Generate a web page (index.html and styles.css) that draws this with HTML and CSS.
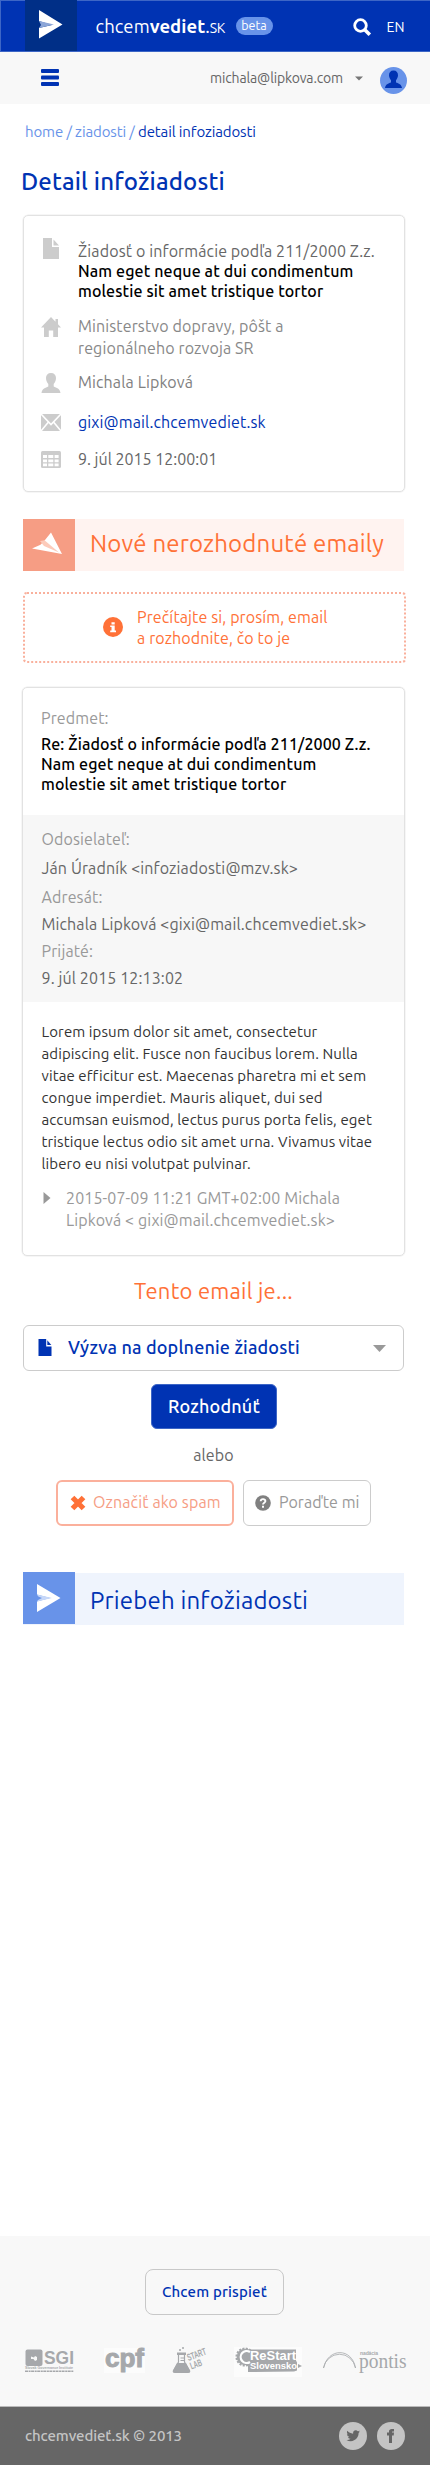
FILE: index.html
```
<!DOCTYPE html>
<html lang="sk">
<head>
<meta charset="utf-8">
<title>Detail infožiadosti – chcemvediet.sk</title>
<link rel="stylesheet" href="styles.css">
</head>
<body>
<header class="topbar">
  <a class="logo"><svg width="52" height="51" viewBox="0 0 52 51"><path d="M14 10 37.500 24.500 14 38.500V28L27 25 14 21z" fill="#fff"/><path d="M14 21 29 24.500 14 28l2-3z" fill="#8ca6d8"/></svg></a>
  <div class="brand"><span>chcem</span><b>vediet</b><span>.</span><span class="brand-tld">SK</span></div>
  <span class="beta">beta</span>
  <svg class="search" width="19" height="19" viewBox="0 0 19 19" fill="none" stroke="#fff"><circle cx="7.500" cy="7.500" r="5.800" stroke-width="2.800"/><path d="m11.800 11.800 5 5" stroke-width="3.600"/></svg>
  <span class="lang">EN</span>
</header>
<nav class="userbar">
  <svg class="menu" width="18" height="17" viewBox="0 0 18 17" fill="#0033b3"><rect width="18" height="4" rx="1"/><rect y="6.500" width="18" height="4" rx="1"/><rect y="13" width="18" height="4" rx="1"/></svg>
  <span class="user">michala@lipkova.com</span>
  <svg class="caret" width="8" height="5" viewBox="0 0 8 5"><path d="M0 .5h8L4 4.500z" fill="#777"/></svg>
  <svg class="avatar" width="27" height="27" viewBox="0 0 27 27"><circle cx="13.500" cy="13.500" r="13.500" fill="#6893e9"/><path d="M13.500 3.500c-3 0-4.700 2-4.500 5 .1 1.600 1 3.500 2 4.700v2.300c-2.700.9-5.500 1.700-6 5.500h17c-.5-3.800-3.300-4.600-6-5.500v-2.300c1-1.200 1.900-3.100 2-4.700.2-3-1.500-5-4.500-5z" fill="#0033b3"/></svg>
</nav>

<main class="page">
  <div class="crumbs"><span class="crumb-links">home / ziadosti / </span><span class="crumb-here">detail infoziadosti</span></div>
  <h1>Detail infožiadosti</h1>

  <section class="card info">
    <div class="row row-subject">
      <svg width="22" height="22" viewBox="0 0 22 22" fill="#ccc"><path d="M3 0h9v9h7v12H3z"/><path d="m13.500 1.500 5.500 6h-5.500z"/></svg>
      <div><div>Žiadosť o informácie podľa 211/2000 Z.z.</div><b>Nam eget neque at dui condimentum</b><br><b>molestie sit amet tristique tortor</b></div>
    </div>
    <div class="row row-office">
      <svg width="22" height="22" viewBox="0 0 22 22" fill="#ccc"><path d="M11 0 1 10.500h3V20h4.800v-6.500h4.400V20H18v-9.500h3L18 7.300V2h-2.500v2.700z"/></svg>
      <div>Ministerstvo dopravy, pôšt a<br>regionálneho rozvoja SR</div>
    </div>
    <div class="row row-person">
      <svg width="22" height="22" viewBox="0 0 22 22" fill="#ccc"><path d="M11 0C7.800 0 6 2 6 5c0 2.200.9 4.500 2.300 6v2.500C5.500 14.800 2 15.500 1.500 20h19c-.5-4.500-4-5.200-6.800-6.500V11c1.400-1.500 2.300-3.800 2.300-6 0-3-1.800-5-5-5z"/></svg>
      <div>Michala Lipková</div>
    </div>
    <div class="row row-mail">
      <svg width="22" height="22" viewBox="0 0 22 22"><path d="M1 0h20v17H1z" fill="#ccc"/><path d="m1 0 10 10.500L21 0M1 17l7.500-9M21 17l-7.500-9" fill="none" stroke="#fff" stroke-width="1.600"/></svg>
      <div>gixi@mail.chcemvediet.sk</div>
    </div>
    <div class="row row-date">
      <svg width="22" height="22" viewBox="0 0 22 22"><rect x="1" width="20" height="17" rx="1.500" fill="#ccc"/><path d="M3 4h4v3H3zm5.300 0h5v3h-5zm6.300 0h4v3h-4zM3 8.500h4v2.700H3zm5.300 0h5v2.700h-5zm6.300 0h4v2.700h-4zM3 12.600h4v2.700H3zm5.300 0h5v2.700h-5zm6.300 0h4v2.700h-4z" fill="#fff"/></svg>
      <div>9. júl 2015 12:00:01</div>
    </div>
  </section>

  <h2 class="banner banner-new">
    <svg width="52" height="52" viewBox="0 0 52 52"><path d="M0 0h52v52H0z" fill="#f69d84"/><path d="M28 13.500 39 35 9 29.500l8.500-3.700L22 21z" fill="#fff"/><path d="m17 22 4.500-.7L36 33.500 21 27z" fill="#fccbbb"/></svg>
    <span>Nové nerozhodnuté emaily</span>
  </h2>

  <div class="notice">
    <svg width="20" height="20" viewBox="0 0 20 20"><circle cx="10" cy="10" r="10" fill="#ff7137"/><path d="M8.500 5.300h3.200V7.500H8.500zM7.200 8.400h4.500v5.100h1.300v1.700H7.200v-1.700h1.300v-3.400H7.200z" fill="#fff"/></svg>
    <div>Prečítajte si, prosím, email<br>a rozhodnite, čo to je</div>
  </div>

  <section class="card email">
    <div class="subject">
      <div class="label">Predmet:</div>
      <b>Re: Žiadosť o informácie podľa 211/2000 Z.z.<br>Nam eget neque at dui condimentum<br>molestie sit amet tristique tortor</b>
    </div>
    <dl class="meta">
      <dt>Odosielateľ:</dt><dd class="from">Ján Úradník &lt;infoziadosti@mzv.sk&gt;</dd>
      <dt>Adresát:</dt><dd>Michala Lipková &lt;gixi@mail.chcemvediet.sk&gt;</dd>
      <dt>Prijaté:</dt><dd>9. júl 2015 12:13:02</dd>
    </dl>
    <p class="body">Lorem ipsum dolor sit amet, consectetur<br>adipiscing elit. Fusce non faucibus lorem. Nulla<br>vitae efficitur est. Maecenas pharetra mi et sem<br>congue imperdiet. Mauris aliquet, dui sed<br>accumsan euismod, lectus purus porta felis, eget<br>tristique lectus odio sit amet urna. Vivamus vitae<br>libero eu nisi volutpat pulvinar.</p>
    <div class="quote">
      <svg width="8" height="12" viewBox="0 0 8 12"><path d="M.5 0 7.500 6l-7 6z" fill="#999"/></svg>
      <div>2015-07-09 11:21 GMT+02:00 Michala<br>Lipková &lt; gixi@mail.chcemvediet.sk&gt;</div>
    </div>
  </section>

  <form class="decide">
    <h3>Tento email je...</h3>
    <div class="select">
      <svg width="14" height="18" viewBox="0 0 14 18" fill="#0033b3"><path d="M.5 0h7.700v7.500h5.300V17H.5z"/><path d="m9.300 1.200 4 4.800h-4z"/></svg>
      <span>Výzva na doplnenie žiadosti</span>
      <svg width="13" height="7" viewBox="0 0 13 7"><path d="M0 0h13L6.500 7z" fill="#999"/></svg>
    </div>
    <a class="btn-primary">Rozhodnúť</a>
    <div class="or">alebo</div>
    <div class="actions">
      <a class="btn spam"><svg width="16" height="16" viewBox="0 0 16 16"><path d="m2.500 2.500 11 11m0-11-11 11" stroke="#ff7137" stroke-width="5.200"/></svg><span>Označiť ako spam</span></a>
      <a class="btn help"><svg width="16" height="16" viewBox="0 0 16 16"><circle cx="8" cy="8" r="7.800" fill="#808080"/><path d="M5.700 6.300c.1-3 4.900-2.700 4.700 0-.1 1.500-2.400 1.500-2.400 3.300" fill="none" stroke="#fff" stroke-width="1.900"/><path d="M7 10.700h2v2H7z" fill="#fff"/></svg><span>Poraďte mi</span></a>
    </div>
  </form>

  <h2 class="banner banner-progress">
    <svg width="52" height="52" viewBox="0 0 52 52"><path d="M0 0h52v52H0z" fill="#6893e9"/><path d="M14 12 37.500 26 14 40V29.500L27 26l-13-3.500z" fill="#fff"/><path d="M14 22.500 29 26l-15 3.500 2-3.500z" fill="#c6d7f8"/><path d="m14 24 5 2-5 2.500z" fill="#6893e9"/></svg>
    <span>Priebeh infožiadosti</span>
  </h2>
</main>

<footer>
  <div class="support">
    <a class="contribute">Chcem prispieť</a>
    <svg class="partners" width="430" height="34" viewBox="0 0 430 34" fill="#a6a8ab">
      <g>
        <rect x="25.500" y="2.500" width="17" height="16.500" rx="2"/><path d="m31 9.500 3 1 1-1.500 2 1v3l-2 1-1.500-2H31z" fill="#f8f8f8"/>
        <text class="sans" x="44" y="16.500" font-size="18" font-weight="700" textLength="30" lengthAdjust="spacingAndGlyphs">SGI</text>
        <text class="sans" x="25" y="22.300" font-size="4.200" font-weight="700" textLength="48" lengthAdjust="spacingAndGlyphs">Slovak Governance Institute</text>
        <path d="M25 24.200h48.500" stroke="#a6a8ab" stroke-width="1.400" stroke-dasharray="3 .6 2 .5"/>
      </g>
      <g>
        <rect x="104" y="1" width="41" height="25" fill="#fcfcfc"/>
        <text class="sans" x="105" y="19.500" font-size="25" font-weight="700" stroke="#a6a8ab" textLength="39" lengthAdjust="spacingAndGlyphs">cpf</text>
      </g>
      <g>
        <path d="M178.500 8v7l-5 8.500q-.8 2 1.500 2h13q2.300 0 1.500-2l-5-8.500V8" fill="none" stroke="#a6a8ab" stroke-width="1.200"/><path d="M177 16h9l4 8q.3 1.500-1.500 1.500h-14q-1.800 0-1.500-1.500zM177 5.500h9V8h-9z"/><circle cx="180" cy="3" r="1"/><circle cx="183" cy="1" r="1"/><path d="M180.500 11h4M180.500 13.500h4" stroke="#a6a8ab"/>
        <g class="sans" font-size="10" font-weight="700"><text transform="translate(188.500 14) rotate(-20)" textLength="19.500" lengthAdjust="spacingAndGlyphs">START</text><text transform="translate(191.500 22.500) rotate(-20)" textLength="12" lengthAdjust="spacingAndGlyphs">LAB</text></g>
      </g>
      <g>
        <path d="M234 0h68v30h-68z" fill="#fcfcfc"/>
        <circle cx="245" cy="10" r="8.300" stroke="#a6a8ab" stroke-width="2.500" stroke-dasharray="2 1.300"/><path d="M246 2.500h50v11l1 2v8l-3 1-46 .5v-8z"/>
        <path d="M250 5a6 6 0 1 0 0 10" fill="none" stroke="#fff" stroke-width="2.200"/>
        <g class="sans" fill="#fff" font-weight="700"><text x="250" y="13.300" font-size="12.500" textLength="46" lengthAdjust="spacingAndGlyphs">ReStart</text><text x="250" y="22.300" font-size="9.500" textLength="47" lengthAdjust="spacingAndGlyphs">Slovensko</text></g>
        <path d="m298 17 4 2-4 2z"/>
      </g>
      <g>
        <path d="M323.500 21A16.300 17 0 0 1 355.500 21C352 .500 328 .500 323.500 21z" fill="none" stroke="#a6a8ab" stroke-width=".8"/>
        <text class="serif" x="359" y="20.500" font-size="22" textLength="47.500" lengthAdjust="spacingAndGlyphs">pontis</text>
        <text class="sans" x="360" y="8" font-size="5" font-weight="700" textLength="18">nadácia</text>
      </g>
    </svg>
  </div>
  <div class="bottom">
    <span>chcemvedieť.sk © 2013</span>
    <svg width="28" height="28" viewBox="0 0 28 28"><circle cx="14" cy="14" r="14" fill="#c4c4c4"/><path transform="translate(7.500 7) scale(.56)" fill="#666" d="M23.950 4.570a10 10 0 0 1-2.820.77 4.960 4.960 0 0 0 2.160-2.720c-.95.560-2 .96-3.130 1.180a4.920 4.920 0 0 0-8.380 4.480C7.690 8.100 4.070 6.130 1.640 3.160a4.920 4.920 0 0 0 1.520 6.570 4.900 4.900 0 0 1-2.230-.61v.06a4.920 4.920 0 0 0 3.950 4.830 5 5 0 0 1-2.210.08 4.940 4.940 0 0 0 4.600 3.420A9.870 9.870 0 0 1 0 19.540a13.990 13.990 0 0 0 7.550 2.210c9.050 0 14-7.500 14-13.980 0-.21 0-.42-.02-.63a9.940 9.940 0 0 0 2.460-2.550z"/></svg>
    <svg width="28" height="28" viewBox="0 0 28 28"><circle cx="14" cy="14" r="14" fill="#c4c4c4"/><path d="M12 21v-7.500h-2v-3h2V9.700C12 7.500 13.200 7 17 7v2.500h-1.200c-.7 0-.8.200-.8 1h2l-.3 3H15V21z" fill="#666"/></svg>
  </div>
</footer>
</body>
</html>
```
FILE: styles.css
```
body{margin:0;width:430px;background:#fff;font-family:Ubuntu,"Noto Sans",sans-serif;font-size:16px;line-height:22px;color:#666;letter-spacing:.12px;white-space:nowrap}
*{box-sizing:border-box}
svg{display:block;flex:none}
b{font-weight:500}
h1,h2,h3,p,dl,dd{margin:0}

.topbar{height:52px;display:flex;background:#0033b3;border:1px solid #3d66c6;border-right:0;color:#fff}
.logo{width:52px;height:51px;margin:-1px 0 0 24px;background:#002f87}
.brand{width:132px;margin:13px 0 0 18.500px;font-size:18.500px;line-height:24px;letter-spacing:.05px}
.brand b{font-weight:700}
.brand-tld{font-size:14px;letter-spacing:-.4px}
.beta{margin:16px 0 0 8px;width:37px;height:18px;border-radius:9px;background:#6893e9;font-size:12.500px;line-height:17px;text-align:center;letter-spacing:0}
.search{margin:17px 0 0 80px}
.lang{margin:15px 0 0 15px;font-size:14px}

.userbar{height:52px;display:flex;background:#f8f8f8}
.menu{margin:17px 0 0 41px}
.user{width:133px;margin:15px 0 0 151px;font-size:14px;letter-spacing:-.14px}
.caret{margin:24px 0 0 12px}
.avatar{margin:15px 0 0 17px}

.page{padding:17px 25px 0 23px}
.crumbs{padding:0 2px;font-size:15px;letter-spacing:-.12px;white-space:pre}
.crumb-links{color:#6893e9}
.crumb-here{color:#0033b3}
h1{margin:22px 0 0 -2px;font-size:24px;line-height:34px;font-weight:500;letter-spacing:.19px;color:#0033b3}

.card{border:1px solid #e2e2e2;border-radius:5px;box-shadow:0 0 0 .5px #eee}
.info{height:277px;margin-top:16px;padding:25px 0 0 16px}
.row{display:flex;gap:16px}
.row-subject{line-height:20px}
.row-subject>svg{margin-top:-3px}
.row-subject b,.subject b{color:#000}
.row-office{margin-top:14px;color:#888}
.row-office>svg,.row-person>svg{margin-top:2px}
.row-person{margin-top:12px;color:#808080}
.row-person>svg,.row-mail>svg,.row-date>svg{margin-bottom:-4px}
.row-mail{margin-top:18px;color:#0033b3}
.row-mail>svg,.row-date>svg{margin-top:3px}
.row-date{margin-top:15px;letter-spacing:0}

.banner{display:flex;width:381px;height:52px;font-size:24px;line-height:50px;font-weight:400;letter-spacing:.18px}
.banner span{padding-left:15px}
.banner-new{margin-top:27px;background:#fff3f0;color:#ff7137}
.banner-progress{margin-top:47px;background:#eff4fd;color:#0033b3}
.banner-progress svg{margin-top:-1px}
.banner-progress span{padding-top:3px}

.notice{display:flex;gap:14px;width:383px;height:71px;margin-top:21px;padding:13px 0 0 78px;border:2px dotted #f9b09c;border-radius:4px;line-height:21px;color:#ff7137}
.notice svg{margin-top:10px}

.email{height:569px;width:383px;margin:24px 0 0 -1px}
.subject{height:127px;padding:19px 0 0 18px;line-height:20px}
.subject .label{line-height:22px;margin-bottom:5px}
.subject b{display:block}
.label,dt{color:#999}
.meta{height:187px;padding:13px 0 0 18.500px;background:#f7f7f7}
.meta dt,.meta dd{height:27px}
.meta dt:first-child,.meta .from{height:29px}
.body{padding:19px 0 0 18.500px;color:#333;font-size:15px;letter-spacing:.1px}
.quote{display:flex;gap:15px;margin-top:12px;padding-left:20px;color:#999}
.quote svg{margin-top:5px}

.decide{text-align:center;width:381px}
h3{margin-top:21px;font-size:22px;line-height:28px;font-weight:400;letter-spacing:.25px;color:#ff7137}
.select{display:flex;height:46px;margin-top:20px;padding:0 17px 0 14px;align-items:center;border:1.500px solid #ccc;border-radius:6px;color:#0033b3;font-size:18px;font-weight:500;letter-spacing:.16px}
.select span{flex:1;text-align:left;padding:0 0 3px 16px}
.btn-primary{display:block;width:126px;height:45px;margin:13px auto 0 128px;border:1px solid #3d66c6;border-radius:6px;background:#0033b3;color:#fff;font-size:18px;line-height:42px;font-weight:500;letter-spacing:.2px}
.or{margin-top:15px}
.actions{display:flex;gap:9px;margin:14px 0 0 33px}
.btn{display:flex;height:46px;align-items:center;border:1.500px solid #ccc;border-radius:6px}
.btn span{padding-bottom:2px}
.spam{width:178px;padding-left:12px;gap:7px;border:2px solid #fbb09c;color:#f69d84}
.help{width:128px;padding-left:11px;gap:8px;color:#999;letter-spacing:.05px}

.support{height:170px;padding-top:33px;margin-top:611px;background:#f8f8f8}
.contribute{display:block;width:139px;height:46px;margin-left:145px;border:1px solid #c8c8c8;border-radius:8px;color:#0033b3;font-size:15px;font-weight:500;line-height:43px;letter-spacing:.17px;text-align:center}
.partners{margin-top:32px;overflow:visible}
.sans{font-family:"Liberation Sans",sans-serif;letter-spacing:0}
.serif{font-family:"Liberation Serif",serif;letter-spacing:0}
.bottom{display:flex;align-items:center;gap:10px;height:59px;padding:0 25px 0 25px;border-top:1px solid #bbb;background:#666;color:#c4c4c4;font-size:15px;font-weight:500;letter-spacing:-.1px}
.bottom span{flex:1}
```
